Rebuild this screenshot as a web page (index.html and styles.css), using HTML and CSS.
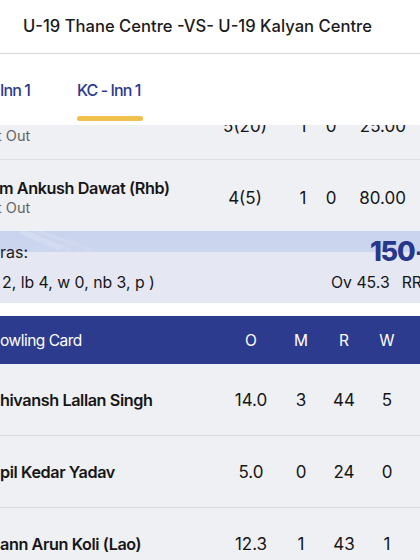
FILE: index.html
```html
<!DOCTYPE html>
<html>
<head>
<meta charset="utf-8">
<link rel="stylesheet" href="styles.css">
</head>
<body>
<div class="screen">
  <header class="topbar">U-19 Thane Centre -VS- U-19 Kalyan Centre</header>
  <nav class="tabs">
    <div class="tab">Inn 1</div>
    <div class="tab active">KC - Inn 1<span class="bar"></span></div>
  </nav>
  <main class="content">
    <div class="scroll">
      <div class="bat-row">
        <div class="name-cell"><div class="pname">&nbsp;</div><div class="status">t Out</div></div>
        <div class="c-r">5(20)</div><div class="c-4">1</div><div class="c-6">0</div><div class="c-sr">25.00</div>
      </div>
      <div class="bat-row">
        <div class="name-cell"><div class="pname">m Ankush Dawat (Rhb)</div><div class="status">t Out</div></div>
        <div class="c-r">4(5)</div><div class="c-4">1</div><div class="c-6">0</div><div class="c-sr">80.00</div>
      </div>
      <section class="extras">
        <svg class="deco" width="420" height="21" viewBox="0 0 420 21">
          <path d="M20 0 L70 21" stroke="#d3dbf1" stroke-width="6" fill="none"/>
          <path d="M38 0 L95 21" stroke="#d1d9f0" stroke-width="3" fill="none"/>
          <circle cx="72" cy="18" r="7" fill="none" stroke="#d0d8ef" stroke-width="3"/>
          <path d="M60 21 Q72 8 86 21" stroke="#ced6ee" stroke-width="3" fill="none"/>
        </svg>
        <div class="ex-line1">
          <span class="ex-label">ras:</span>
          <span class="ex-total">150 - 8</span>
        </div>
        <div class="ex-line2">
          <span class="ex-detail">2, lb 4, w 0, nb 3, p )</span>
          <span class="ex-ov">Ov 45.3<span class="rr">RR 3.30</span></span>
        </div>
      </section>
      <div class="gap"></div>
      <div class="bowl-head">
        <div class="b-name">owling Card</div>
        <div class="c-o">O</div><div class="c-m">M</div><div class="c-rr">R</div><div class="c-w">W</div>
      </div>
      <div class="bowl-row">
        <div class="b-name bold">hivansh Lallan Singh</div>
        <div class="c-o">14.0</div><div class="c-m">3</div><div class="c-rr">44</div><div class="c-w">5</div>
      </div>
      <div class="bowl-row">
        <div class="b-name bold">pil Kedar Yadav</div>
        <div class="c-o">5.0</div><div class="c-m">0</div><div class="c-rr">24</div><div class="c-w">0</div>
      </div>
      <div class="bowl-row">
        <div class="b-name bold">ann Arun Koli (Lao)</div>
        <div class="c-o">12.3</div><div class="c-m">1</div><div class="c-rr">43</div><div class="c-w">1</div>
      </div>
    </div>
  </main>
</div>
</body>
</html>
```
FILE: styles.css
```css
* { box-sizing: border-box; }
html, body { margin: 0; padding: 0; }
body {
  font-family: "Inter", "Noto Sans", sans-serif;
  color: #161616;
  background: #ffffff;
}
.screen {
  width: 420px;
  height: 560px;
  overflow: hidden;
  display: flex;
  flex-direction: column;
}
.topbar {
  height: 54px;
  flex: none;
  padding-left: 23px;
  line-height: 53px;
  font-size: 16.6px;
  font-weight: 500;
  color: #1b1b1b;
  border-bottom: 1px solid #d9d9d9;
  white-space: nowrap;
}
.tabs {
  height: 71px;
  flex: none;
  display: flex;
  background: #ffffff;
  position: relative;
  z-index: 2;
}
.tab {
  position: relative;
  font-size: 16px;
  font-weight: 500;
  color: #2b3a8e;
  letter-spacing: -0.9px;
  padding-top: 26px;
  line-height: 20px;
  white-space: nowrap;
}
.tab:first-child { width: 77px; }
.tab.active { width: 66px; }
.tab .bar {
  position: absolute;
  left: 0;
  right: 0;
  top: 62px;
  height: 5px;
  border-radius: 3px;
  background: #efc04c;
}
.content {
  flex: 1;
  overflow: hidden;
  background: #eef0f4;
}
.scroll { margin-top: -36px; }
.bat-row {
  height: 71px;
  display: flex;
  align-items: center;
  padding-top: 4px;
  border-bottom: 1px solid #dcdee3;
  font-size: 17px;
}
.bat-row:nth-child(2) { border-bottom: none; }
.name-cell { width: 215px; flex: none; }
.pname {
  font-weight: 600;
  font-size: 16.2px;
  line-height: 20px;
  letter-spacing: -0.4px;
  white-space: nowrap;
  margin-left: -1px;
}
.status {
  font-size: 14.5px;
  line-height: 20px;
  color: #666666;
  margin-left: -3px;
}
.c-r { width: 60px; text-align: center; }
.c-4 { width: 28px; margin-left: 14px; text-align: center; }
.c-6 { width: 28px; text-align: center; }
.c-sr { width: 61px; text-align: right; }
.extras {
  position: relative;
  height: 72px;
  background: linear-gradient(to bottom, #c9d3ed 0, #cdd6ef 21px, #e5e7f3 21px);
  overflow: hidden;
}
.deco { position: absolute; left: 0; top: 0; }
.ex-line1 {
  position: relative;
  display: flex;
  padding-top: 10px;
  height: 32px;
  line-height: 22px;
  white-space: nowrap;
}
.ex-label { width: 370px; flex: none; font-size: 16px; color: #1c1c1c; }
.ex-total {
  font-size: 27px;
  font-weight: 800;
  color: #27378a;
  letter-spacing: -1.3px;
  word-spacing: -4px;
}
.ex-line2 {
  display: flex;
  margin-top: 9px;
  line-height: 22px;
  font-size: 15.8px;
  white-space: nowrap;
}
.ex-detail { width: 331px; flex: none; padding-left: 2px; }
.rr { margin-left: 12px; }
.gap { height: 13px; background: #ffffff; }
.bowl-head {
  height: 48px;
  background: #2d3b8f;
  color: #ffffff;
  display: flex;
  align-items: center;
  font-size: 15.5px;
}
.bowl-head .b-name { letter-spacing: -0.5px; }
.bowl-row {
  height: 72px;
  display: flex;
  align-items: center;
  border-bottom: 1px solid #d9dbe1;
  font-size: 17px;
}
.b-name { width: 230px; flex: none; white-space: nowrap; }
.b-name.bold { font-weight: 600; font-size: 16.2px; letter-spacing: -0.4px; }
.c-o { width: 42px; text-align: center; }
.c-m { width: 42px; margin-left: 8px; text-align: center; }
.c-rr { width: 42px; margin-left: 1px; text-align: center; }
.c-w { width: 42px; margin-left: 1px; text-align: center; }
```
